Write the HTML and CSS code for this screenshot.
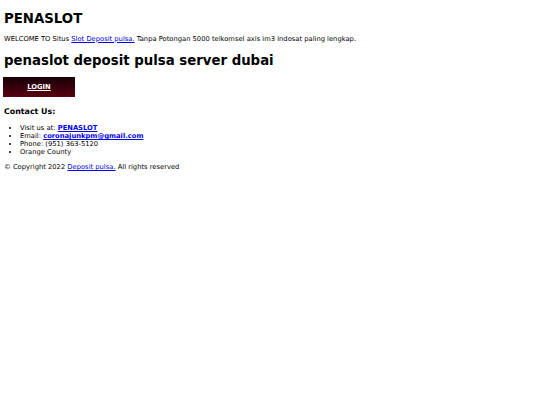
FILE: index.html
```html
<!DOCTYPE html>
<html>
<head>
<meta charset="utf-8">
<link rel="stylesheet" href="styles.css">
</head>
<body>
<div class="page">
  <h1 class="title">PENASLOT</h1>
  <p class="intro">WELCOME TO Situs <a href="#" class="link">Slot Deposit pulsa.</a> Tanpa Potongan 5000 telkomsel axis im3 indosat paling lengkap.</p>
  <h2 class="subtitle">penaslot deposit pulsa server dubai</h2>
  <a href="#" class="login">LOGIN</a>
  <h3 class="contact-title">Contact Us:</h3>
  <ul class="contact-list">
    <li>Visit us at: <a href="#" class="link strong">PENASLOT</a></li>
    <li>Email: <a href="#" class="link strong">coronajunkpm@gmail.com</a></li>
    <li>Phone: (951) 363-5120</li>
    <li>Orange County</li>
  </ul>
  <p class="footer">© Copyright 2022 <a href="#" class="link">Deposit pulsa.</a> All rights reserved</p>
</div>
</body>
</html>
```
FILE: styles.css
```css
html, body {
  margin: 0;
  padding: 0;
  background: #fff;
}
body {
  font-family: "DejaVu Sans", Verdana, sans-serif;
  font-size: 6.75px;
  line-height: 8px;
  color: #000;
}
.page {
  padding: 10.5px 4px 0;
}
.title {
  font-size: 13.3px;
  font-weight: bold;
  margin: 0;
  line-height: 16px;
}
.intro {
  margin: 8px 0 0;
}
.link {
  color: #0000ee;
}
.strong {
  font-weight: bold;
}
.subtitle {
  font-size: 13.3px;
  font-weight: bold;
  margin: 10.3px 0 0;
  line-height: 16px;
}
.login {
  display: block;
  width: 72px;
  height: 20px;
  line-height: 20px;
  margin: 8.3px 0 0 -1px;
  text-align: center;
  color: #fff;
  font-weight: bold;
  background: linear-gradient(#140006, #5a0010);
}
.contact-title {
  font-size: 7.9px;
  font-weight: bold;
  margin: 9.5px 0 0;
  line-height: 9px;
}
.contact-list {
  margin: 8.5px 0 0;
  padding-left: 16px;
}
.footer {
  margin: 7px 0 0;
}
```
